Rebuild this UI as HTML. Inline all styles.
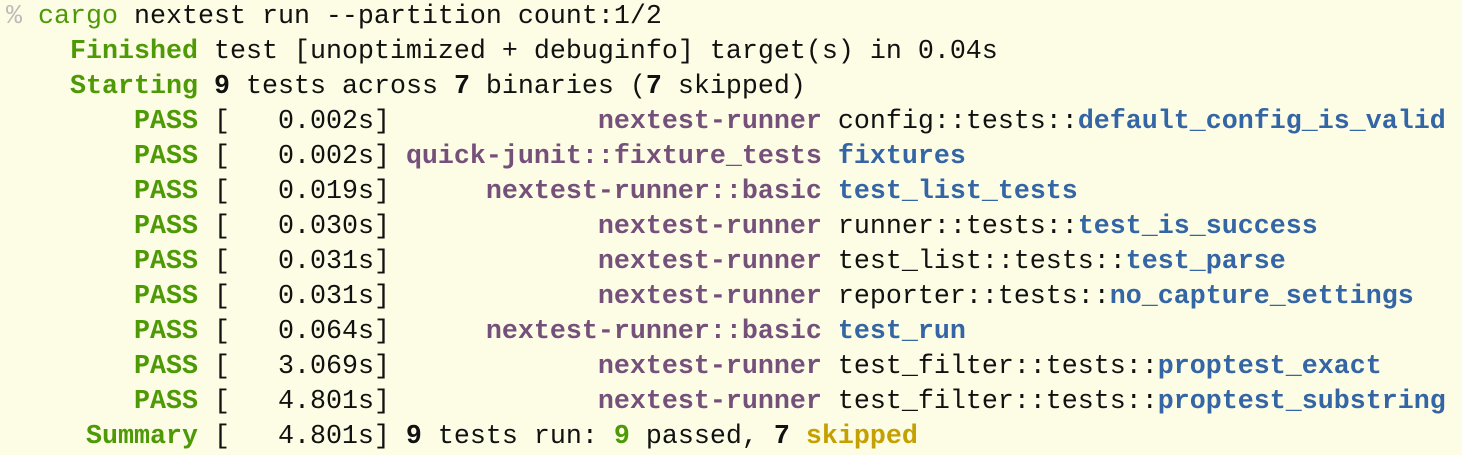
<!DOCTYPE html>
<html><head><meta charset="utf-8"><style>
html,body{margin:0;padding:0;background:#fdfde6;width:1462px;height:452px;overflow:hidden}
pre{margin:0;padding:0;position:absolute;left:6px;top:0px;font-family:"Liberation Mono",monospace;font-size:26.67px;line-height:35px;color:#111}
.g{color:#4e9a06;font-weight:bold}.c{color:#4e9a06}
.p{color:#75507b;font-weight:bold}.b{color:#3465a4;font-weight:bold}
.y{color:#c4a000;font-weight:bold}.k{font-weight:bold}.d{color:#bbb}
</style></head><body><pre><span class="d">%</span> <span class="c">cargo</span> nextest run --partition count:1/2
    <span class="g">Finished</span> test [unoptimized + debuginfo] target(s) in 0.04s
    <span class="g">Starting</span> <span class="k">9</span> tests across <span class="k">7</span> binaries (<span class="k">7</span> skipped)
        <span class="g">PASS</span> [   0.002s]             <span class="p">nextest-runner</span> config::tests::<span class="b">default_config_is_valid</span>
        <span class="g">PASS</span> [   0.002s] <span class="p">quick-junit::fixture_tests</span> <span class="b">fixtures</span>
        <span class="g">PASS</span> [   0.019s]      <span class="p">nextest-runner::basic</span> <span class="b">test_list_tests</span>
        <span class="g">PASS</span> [   0.030s]             <span class="p">nextest-runner</span> runner::tests::<span class="b">test_is_success</span>
        <span class="g">PASS</span> [   0.031s]             <span class="p">nextest-runner</span> test_list::tests::<span class="b">test_parse</span>
        <span class="g">PASS</span> [   0.031s]             <span class="p">nextest-runner</span> reporter::tests::<span class="b">no_capture_settings</span>
        <span class="g">PASS</span> [   0.064s]      <span class="p">nextest-runner::basic</span> <span class="b">test_run</span>
        <span class="g">PASS</span> [   3.069s]             <span class="p">nextest-runner</span> test_filter::tests::<span class="b">proptest_exact</span>
        <span class="g">PASS</span> [   4.801s]             <span class="p">nextest-runner</span> test_filter::tests::<span class="b">proptest_substring</span>
     <span class="g">Summary</span> [   4.801s] <span class="k">9</span> tests run: <span class="g">9</span> passed, <span class="k">7</span> <span class="y">skipped</span></pre></body></html>
